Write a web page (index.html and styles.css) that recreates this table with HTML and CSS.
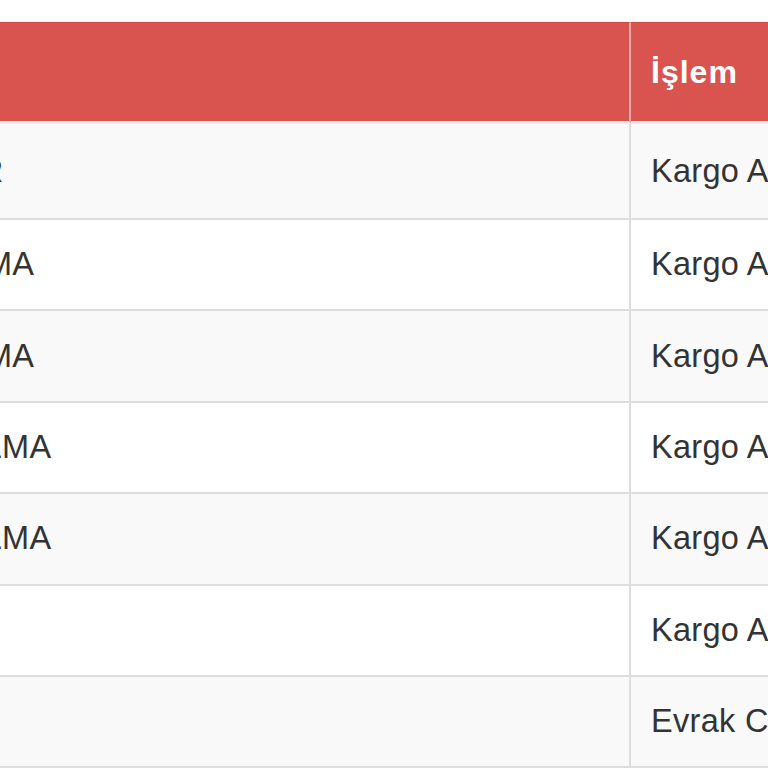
FILE: index.html
```html
<!DOCTYPE html>
<html lang="tr">
<head>
<meta charset="utf-8">
<title>Kargo İşlemleri</title>
<link rel="stylesheet" href="styles.css">
</head>
<body>
<div class="viewport">
  <table class="orders">
    <thead>
      <tr class="head-row">
        <th class="col-status">Durum</th>
        <th class="col-action">İşlem</th>
      </tr>
    </thead>
    <tbody>
      <tr class="row-first"><td class="col-status">NOT VAR</td><td class="col-action">Kargo Aktarma</td></tr>
      <tr><td class="col-status">İADE ALMA</td><td class="col-action">Kargo Aktarma</td></tr>
      <tr><td class="col-status">İADE ALMA</td><td class="col-action">Kargo Aktarma</td></tr>
      <tr><td class="col-status">YANIT ALMA</td><td class="col-action">Kargo Aktarma</td></tr>
      <tr><td class="col-status">YANIT ALMA</td><td class="col-action">Kargo Aktarma</td></tr>
      <tr><td class="col-status">YOLDA</td><td class="col-action">Kargo Aktarma</td></tr>
      <tr><td class="col-status">İADE</td><td class="col-action">Evrak Cevap</td></tr>
    </tbody>
  </table>
</div>
</body>
</html>
```

FILE: styles.css
```css
html, body {
  margin: 0;
  padding: 0;
  background: #ffffff;
}

body {
  font-family: "Liberation Sans", Arial, sans-serif;
  color: #333333;
}

.viewport {
  width: 768px;
  height: 768px;
  overflow: hidden;
  padding-top: 22px;
  box-sizing: border-box;
}

.orders {
  border-collapse: separate;
  border-spacing: 0;
  table-layout: fixed;
  width: 1100px;
  margin-left: -160px;
  white-space: nowrap;
}

.orders th,
.orders td {
  text-align: left;
  vertical-align: middle;
  overflow: hidden;
}

.orders .col-status {
  width: 791px;
  box-sizing: border-box;
  padding: 0 20px;
}

.orders .col-action {
  padding: 0 20px;
}

.head-row {
  height: 102px;
}

.orders th {
  background: #d9534f;
  color: #ffffff;
  font-weight: bold;
  font-size: 32px;
  letter-spacing: 1px;
  padding-bottom: 12px;
  border-top: 1px solid #cf4a46;
  border-bottom: 3px solid #f1e9e9;
}

.orders th.col-status {
  border-right: 2px solid #f0a9a6;
}

.orders td {
  font-size: 32.5px;
  letter-spacing: 0.3px;
  border-bottom: 2px solid #dddddd;
}

.orders td.col-status {
  border-right: 2px solid #dddddd;
}

.orders tbody tr {
  height: 91.4px;
  background: #ffffff;
}

.orders tbody tr.row-first {
  height: 96px;
}

.orders tbody tr:nth-child(odd) {
  background: #f9f9f9;
}
```
